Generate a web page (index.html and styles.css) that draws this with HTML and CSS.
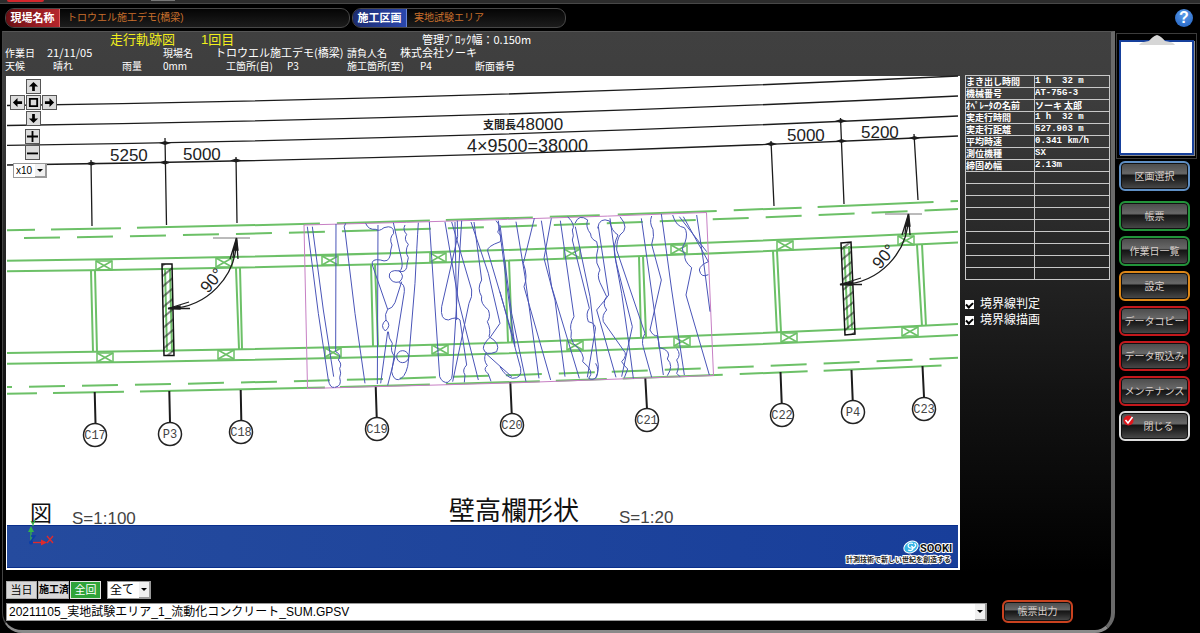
FILE: index.html
```html
<!DOCTYPE html>
<html lang="ja">
<head>
<meta charset="utf-8">
<title>走行軌跡図</title>
<link rel="stylesheet" href="styles.css">
</head>
<body>
<div class="titlebar"><span class="titlebar-mark"></span><span class="titlebar-dots"></span></div>
<header class="header">
  <div class="field field-site"><span class="field-label label-red">現場名称</span><span class="field-value">トロウエル施工デモ(橋梁)</span></div>
  <div class="field field-area"><span class="field-label label-blue">施工区画</span><span class="field-value">実地試験エリア</span></div>
  <button class="help" aria-label="ヘルプ">?</button>
</header>
<div class="layout">
<main class="panel">
  <div class="info">
    <div class="info-top"><h1 class="title">走行軌跡図</h1><span class="title">1回目</span><span class="block-width">管理ﾌﾞﾛｯｸ幅：0.150m</span></div>
    <div class="info-grid">
      <span class="c1">作業日</span><span class="c2 value">21/11/05</span><span class="c4">現場名</span><span class="c5 value wide">トロウエル施工デモ(橋梁)</span><span class="c7">請負人名</span><span class="c8 value">株式会社ソーキ</span>
      <span class="c1 r2">天候</span><span class="c2 r2 inset">晴れ</span><span class="c3 r2">雨量</span><span class="c4 r2">0mm</span><span class="c5 r2 inset-wide">工箇所(自)</span><span class="c6 r2">P3</span><span class="c7 r2 span">施工箇所(至)</span><span class="c9 r2">P4</span><span class="c10 r2">断面番号</span>
    </div>
  </div>
  <div class="work">
    <section class="canvas">
      <svg class="drawing" viewBox="6 75 954 495" role="img" aria-label="橋梁図面と走行軌跡">
        <defs>
          <g id="box"><rect x="-8" y="-4" width="16" height="9"/><path d="M-8 -4L8 5M8 -4L-8 5"/></g>
          <pattern id="hatch" width="8" height="8" patternUnits="userSpaceOnUse" patternTransform="rotate(-40)"><path d="M0 4H8" class="hatch-line"/></pattern>
          <linearGradient id="band" x1="0" x2="1"><stop offset="0" stop-color="#254b9e"/><stop offset="1" stop-color="#183e9a"/></linearGradient>
          <g id="angle">
            <path class="thin" d="M213 238H250"/>
            <path class="ink" d="M236.500 240A69 69 0 0 1 170 308.500"/>
            <path class="ink fill" d="M236.500 238L234 250L238 250Z"/>
            <path class="ink" d="M236.500 238L230 259M236.500 238L238 259M233 258L234 248"/>
            <path class="ink fill" d="M168 308.500L180 306L180 309Z"/>
            <path class="ink" d="M168 308.500L189 302M168 308.500H190"/>
            <text class="dim" transform="translate(208 294) rotate(-50)">90°</text>
          </g>
        </defs>
        <rect class="paper" x="6" y="76" width="954" height="494"/>
        <g class="plan">
          <path stroke-dasharray="28 16 70 16 183 17 93 16 87 17 50 18 99 17 68 16 116 17 20" d="M7 230.300Q482 222.300 958 201"/>
          <path stroke-dasharray="36 17" stroke-dashoffset="36" d="M7 238.300Q482 230.900 958 209"/>
          <path d="M7 260.700Q482 255.200 958 231.700M7 271.300Q482 265.900 958 242.500M7 353Q482 348 958 324M7 363.700Q482 358.700 958 335"/>
          <path stroke-dasharray="36 17" stroke-dashoffset="31" d="M7 387Q482 379.600 958 357.700"/>
          <path stroke-dasharray="30 16 71 16 185 15 90 16 94 16 51 16 100 17 68 16 118 20" d="M7 393.700Q482 386.800 958 364.700"/>
          <path d="M91 271L93 352M95 271L97 352M236 268L239 349M240 268L242 349M371 264L373 346M375 264L378 346M505 261L508 342M509 260L512 342M639 256L641 337M643 256L646 337M773 251L777 333M777 251L781 332M917 245L922 326M922 244L926 326"/>
          <use href="#box" x="104" y="265"/><use href="#box" x="224" y="262"/><use href="#box" x="330" y="260"/><use href="#box" x="438" y="257"/><use href="#box" x="572" y="253"/><use href="#box" x="679" y="249"/><use href="#box" x="785" y="245"/><use href="#box" x="906" y="240"/>
          <use href="#box" x="105" y="357"/><use href="#box" x="226" y="354"/><use href="#box" x="333" y="352"/><use href="#box" x="440" y="349"/><use href="#box" x="575" y="345"/><use href="#box" x="682" y="341"/><use href="#box" x="789" y="337"/><use href="#box" x="910" y="331"/>
          <path d="M165 268L167 352M170 268L172 352M844 246L848 330M849 246L852 330"/>
        </g>
        <g class="ink">
          <path d="M7 105.500Q482 98.900 958 76M7 125.500Q482 118.900 958 96M7 145.300Q482 138.900 958 116M7 165Q482 158.500 958 136"/>
          <path d="M91 160L92 226M165 138L166.500 225M236 157L237 223M771 141L774 206M840.500 118L844 204M914 134L918 200"/>
          <path class="hatched" d="M162 264L172 264L174 355.500L164 355.500Z"/>
          <path class="hatched" d="M841 243L851 242L855 334L845 335Z"/>
          <path class="stem" d="M94.700 392L95.500 423M169.300 391L170 422M240.700 390L241.300 420M375.700 386L376.700 417M510.300 382L511.700 413M645.300 378L647 409M780.500 372L781.700 403M851.500 370L852.700 400M922.500 366L924 397"/>
        </g>
        <g class="tick">
          <path d="M159 143L165 141L171 143L165 145ZM835 121L841 119L847 121L841 123ZM86 163.500L91.500 161.500L97 163.500L91.500 165.500ZM159 162.500L165 160.500L171 162.500L165 164.500ZM230 160.500L236 158.500L242 160.500L236 162.500ZM765 144L771 142L777 144L771 146ZM836 141L841.500 139L847 141L841.500 143ZM909 138L914.500 136L920 138L914.500 140Z"/>
        </g>
        <use href="#angle"/><use href="#angle" x="672" y="-24"/>
        <g class="dim">
          <text x="110" y="161">5250</text><text x="183" y="160">5000</text><text x="787" y="141">5000</text><text x="861" y="138">5200</text>
          <text class="span-label" x="483" y="129">支間長</text><text x="516" y="130">48000</text><text class="dim-large" x="467" y="152">4×9500=38000</text>
        </g>
        <g class="grid-mark">
          <circle cx="95" cy="435" r="11.500"/><circle cx="170" cy="434" r="11.500"/><circle cx="241" cy="432" r="11.500"/><circle cx="377" cy="429" r="11.500"/><circle cx="512" cy="425" r="11.500"/><circle cx="647" cy="420" r="11.500"/><circle cx="782" cy="415" r="11.500"/><circle cx="853" cy="412" r="11.500"/><circle cx="924" cy="409" r="11.500"/>
          <text x="95" y="439">C17</text><text x="170" y="438">P3</text><text x="241" y="436">C18</text><text x="377" y="433">C19</text><text x="512" y="429">C20</text><text x="647" y="424">C21</text><text x="782" y="419">C22</text><text x="853" y="416">P4</text><text x="924" y="413">C23</text>
        </g>
        <path class="boundary" d="M304 225Q510 220 706.500 212.500L713.500 375.500Q510 384 307.500 388.500Z"/>
        <g class="track" transform="translate(295 200) scale(.33333)">
          <path d="M37 80L70 340L100 540Q105 565 118 562M52 80L85 330L116 530"/>
          <path d="M123 72L122 455q20 10 8 25q12 12 4 25q6 15 0 28q8 25 -14 29"/>
          <path d="M152 70q-8 10 -2 22L180 340L210 550M249 75L247 552"/>
          <path d="M212 70q8 20 30 18q10 8 25 -5q30 -10 29 17q-15 15 -5 35q-5 15 -5 30q-5 25 -30 15q-28 -5 -24 15L278 328"/>
          <path d="M295 68L320 180q5 25 -6 33q-34 -6 -31 18q8 20 30 15q20 -18 -2 -34M320 245L300 308q-8 18 -22 20q-10 15 -5 32q-20 17 -2 33q20 -17 2 -33M280 395q0 20 12 35q-8 25 8 40L278 556M278 395L257 550"/>
          <path d="M330 75q-8 15 5 28q-10 15 5 30q-12 20 0 40q-5 20 -5 30q-5 15 -22 11"/>
          <path d="M312 248Q330 250 328 275L290 515q5 25 20 24q20 -5 28 -40L342 468L360 250Q366 130 370 68"/>
          <circle cx="323" cy="470" r="18"/>
          <path d="M403 66L434 530q8 20 25 17q15 -10 13 -25L500 62M450 66L490 300L550 540M470 66L530 270Q533 290 522 310L473 545"/>
          <path d="M487 62L488 110L440 320q-5 40 20 40q25 -12 35 0L515 495q-15 15 -5 30l-2 22M480 66L485 360"/>
          <path d="M528 66L580 220L615 370L587 410M537 66L560 240q-15 25 0 50q-5 20 20 40q8 20 -3 35q12 25 5 45Q618 430 605 455Q570 470 565 445q0 -15 22 -35"/>
          <path d="M572 460q-8 20 5 37q-15 10 3 25l8 22M572 460L650 530M603 62q15 15 5 35q15 10 8 28q-42 15 -38 28L660 430M610 62L660 440"/>
        </g>
        <g class="track" transform="translate(500 200) scale(.33333)">
          <path d="M0 75L35 340L78 545M0 275L62 505q5 30 -25 30q-20 -5 -37 -35"/>
          <path d="M48 65L75 230L117 535M103 55L70 190q15 40 2 70L152 540M124 62L155 260L238 535M154 55L132 175L165 300L195 530"/>
          <path d="M181 62L222 350q-15 25 -8 45q-5 18 6 35q38 35 28 55q38 30 18 50q14 8 24 -5q8 -22 -3 -40"/>
          <path d="M203 50q25 25 14 40q6 20 0 30L268 325q-12 15 -3 40q27 5 20 30L262 532"/>
          <path d="M225 70q12 -30 38 -10q-8 20 9 42q0 15 18 23q8 20 0 40q-4 25 10 45q-10 15 0 38L320 290q-15 20 0 40q-15 15 -10 35L370 450q15 15 -5 35q10 15 18 22l-10 26"/>
          <path d="M226 80L270 290L292 480q8 25 -5 55"/>
          <path d="M293 85q5 -35 36 -22q5 30 25 42q-15 30 -10 60L365 280L385 420L400 535"/>
          <path d="M295 80L326 285Q315 300 290 330L348 532M330 55L348 185L397 380L365 530M360 50q30 35 0 55q-10 15 -10 45L435 400q-12 20 -5 42L455 532"/>
          <path d="M424 55L490 525M455 48q-8 20 4 40q5 20 -4 45L484 240L450 390q10 20 22 17q5 20 5 35q40 10 25 35q20 20 0 50"/>
          <path d="M484 42L515 270L553 525M518 45q10 35 35 38q12 15 2 45q-15 20 0 35q-5 20 20 40L558 285L628 525M530 445q15 20 0 35q10 20 0 40l10 10"/>
          <path d="M538 50L620 155M550 50L625 185q-25 10 -27 25q5 25 27 14M590 45L612 195L630 335"/>
        </g>
        <g class="caption">
          <text class="caption-view" x="30" y="521">図</text><text x="72" y="524">S=1:100</text>
          <text class="caption-shape" x="449" y="520">壁高欄形状</text><text x="619" y="523">S=1:20</text>
        </g>
        <rect x="7" y="525" width="951" height="43" fill="url(#band)"/>
        <path class="band-edge" d="M7 525.500H958M7 567.500H958"/>
        <g class="axis">
          <path stroke="#35b44a" d="M31 542V530"/><path fill="#35b44a" d="M28 532L31 526L34 532Z"/>
          <path stroke="#35b44a" d="M31 521L33 524L35 520M33 524V526"/>
          <path stroke="#e02b2b" d="M33 542.500H42"/><path fill="#e02b2b" d="M41 539.500L47 542.500L41 545.500Z"/>
          <path stroke="#e02b2b" d="M47 536L53 543M53 536L47 543"/>
          <circle cx="31" cy="542.500" r="2" fill="#0b3fa8"/><path stroke="#0b3fa8" d="M31 536H35L31 541"/>
        </g>
        <g class="logo">
          <ellipse class="logo-halo" cx="911" cy="547" rx="8" ry="6" transform="rotate(-25 911 547)"/>
          <ellipse cx="911" cy="547" rx="7" ry="5" fill="#36b5e6" transform="rotate(-25 911 547)"/>
          <path class="logo-swirl" d="M913 543.500c-5 -2 -7 4 -2 4.500c5 1 6 -5 3 -4M908 550c5 2 7 -3 3 -4"/>
          <text class="logo-name" x="920" y="552">SOOKI</text>
          <text class="logo-tag" x="846" y="562">計測技術で新しい世紀を創造する</text>
        </g>
      </svg>
      <div class="controls">
        <div class="pad">
          <button class="pad-up" aria-label="上へ"><svg viewBox="0 0 12 12"><path d="M6 1L11 6H7.500V11H4.500V6H1Z"/></svg></button>
          <button class="pad-left" aria-label="左へ"><svg viewBox="0 0 12 12"><path d="M1 6L6 1V4.500H11V7.500H6V11Z"/></svg></button>
          <button class="pad-home" aria-label="中央"><svg viewBox="0 0 12 12"><path fill-rule="evenodd" d="M1 1H11V11H1ZM3 3V9H9V3Z"/></svg></button>
          <button class="pad-right" aria-label="右へ"><svg viewBox="0 0 12 12"><path d="M11 6L6 1V4.500H1V7.500H6V11Z"/></svg></button>
          <button class="pad-down" aria-label="下へ"><svg viewBox="0 0 12 12"><path d="M6 11L11 6H7.500V1H4.500V6H1Z"/></svg></button>
        </div>
        <div class="zoom">
          <button aria-label="拡大"><svg viewBox="0 0 12 12"><path d="M5 0H7V5H12V7H7V12H5V7H0V5H5Z"/></svg></button>
          <button aria-label="縮小"><svg viewBox="0 0 12 12"><path d="M0 6H12V8H0Z"/></svg></button>
        </div>
        <div class="select select-scale"><select aria-label="倍率"><option>x10</option></select><span class="caret"></span></div>
      </div>
    </section>
    <section class="details">
      <table class="specs">
        <tbody>
          <tr><th scope="row">まき出し時間</th><td>1 h  32 m</td></tr>
          <tr><th scope="row">機械番号</th><td>AT-75G-3</td></tr>
          <tr><th scope="row">ｵﾍﾟﾚｰﾀの名前</th><td class="jp">ソーキ 太郎</td></tr>
          <tr><th scope="row">実走行時間</th><td>1 h  32 m</td></tr>
          <tr><th scope="row">実走行距離</th><td>527.903 m</td></tr>
          <tr><th scope="row">平均時速</th><td>0.341 km/h</td></tr>
          <tr><th scope="row">測位機種</th><td>SX</td></tr>
          <tr><th scope="row">締固め幅</th><td>2.13m</td></tr>
          <tr><th></th><td></td></tr><tr><th></th><td></td></tr><tr><th></th><td></td></tr>
          <tr><th></th><td></td></tr><tr><th></th><td></td></tr><tr><th></th><td></td></tr>
          <tr><th></th><td></td></tr><tr><th></th><td></td></tr><tr><th></th><td></td></tr>
        </tbody>
      </table>
      <div class="checks">
        <label><input type="checkbox" checked>境界線判定</label>
        <label><input type="checkbox" checked>境界線描画</label>
      </div>
    </section>
  </div>
  <div class="filters">
    <button class="tab">当日</button><button class="tab tab-tight">施工済</button><button class="tab tab-on">全回</button>
    <div class="select select-all"><select aria-label="層"><option>全て</option></select><span class="caret"></span></div>
  </div>
  <div class="output">
    <div class="select select-file"><select aria-label="ファイル"><option>20211105_実地試験エリア_1_流動化コンクリート_SUM.GPSV</option></select><span class="caret"></span></div>
    <button class="btn btn-output">帳票出力</button>
  </div>
</main>
<aside class="sidebar">
  <div class="clipboard">
    <svg class="clip-icon" viewBox="0 0 36 10" aria-hidden="true"><path d="M0 10Q1 7 10 6Q14 1 18 0Q22 1 26 6Q35 7 36 10Z"/></svg>
    <div class="sheet"></div>
  </div>
  <nav class="menu">
    <button class="btn blue">区画選択</button>
    <button class="btn green first">帳票</button>
    <button class="btn green">作業日一覧</button>
    <button class="btn orange">設定</button>
    <button class="btn red">データコピー</button>
    <button class="btn red">データ取込み</button>
    <button class="btn red">メンテナンス</button>
    <button class="btn white"><svg class="close-mark" viewBox="0 0 11 11" aria-hidden="true"><circle cx="5.500" cy="5.500" r="5" fill="#e0161c"/><path d="M2.500 5L5 8L9.500 2" fill="none" stroke="#fff" stroke-width="1.500"/></svg><span>閉じる</span></button>
  </nav>
</aside>
</div>
</body>
</html>
```
FILE: styles.css
```css
* { box-sizing: border-box; }
body {
  margin: 0;
  min-height: 100vh;
  display: flex;
  flex-direction: column;
  background: #000;
  color: #fff;
  font: 10px/13px "Liberation Sans", "Noto Sans CJK JP", sans-serif;
}
button, select, input { font: inherit; margin: 0; padding: 0; border-radius: 0; }
.titlebar { display: flex; align-items: flex-start; gap: 107px; height: 4px; padding-left: 7px; background: #2c2c2c; border-bottom: 1px solid #484848; }
.titlebar-mark { width: 37px; height: 2px; border-radius: 0 0 4px 4px; background: #d5262b; }
.titlebar-dots { width: 24px; height: 1px; background: #777; }
.header { display: flex; align-items: center; gap: 2px; height: 27px; padding: 0 7px 0 5px; }
.field { display: flex; height: 20px; border: 1px solid #484848; border-radius: 9px; overflow: hidden; background: linear-gradient(#050505, #1c1c1c); }
.field-site { flex: 0 1 345px; }
.field-area { flex: 0 1 214px; }
.field-label { width: 54px; line-height: 18px; text-align: center; font-size: 11px; font-weight: bold; }
.label-red { background: linear-gradient(90deg, #6b0f14, #b5262c); border-right: 1px solid #e05a5a; }
.label-blue { background: linear-gradient(90deg, #1c2c70, #2a47ad); border-right: 1px solid #6a86d8; }
.field-value { padding-left: 7px; line-height: 18px; color: #c9702c; white-space: nowrap; }
.help { margin-left: auto; width: 18px; height: 18px; border: 0; border-radius: 50%; background: radial-gradient(circle at 50% 30%, #5b9be8, #1f5fc0); color: #fff; font-size: 16px; line-height: 18px; font-weight: bold; }

.layout { flex: 1; display: flex; align-items: stretch; }
.panel {
  flex: 1;
  min-width: 0;
  padding: 0 0 5px 3px;
  border: solid #666;
  border-width: 1px 4px 3px 1px;
  border-color: #555 #6a6a6a #8a8a8a #444;
  border-radius: 0 0 20px 20px;
  margin-left: 2px;
  background: linear-gradient(#404040 0, #3e3e3e 60px, #262626 220px, #131313 360px, #000 540px);
}
.info { height: 43px; margin-left: -1px; white-space: nowrap; }
.info-top { display: flex; align-items: center; padding-left: 105px; height: 14px; }
.title { width: 91px; margin: 0; font-size: 13px; font-weight: normal; color: #f2ee1c; }
.title + .title { width: 221px; }
.block-width { font: 11px/13px "Noto Sans CJK JP", sans-serif; }
.info-grid { display: grid; grid-template-columns: 42px 75px 41px 52px 72px 60px 53px 20px 55px auto; grid-auto-rows: 13px; justify-content: start; font-family: "Noto Sans CJK JP", sans-serif; }
.c1 { grid-column: 1; } .c2 { grid-column: 2; } .c3 { grid-column: 3; } .c4 { grid-column: 4; } .c5 { grid-column: 5; }
.c6 { grid-column: 6; } .c7 { grid-column: 7; } .c8 { grid-column: 8; } .c9 { grid-column: 9; } .c10 { grid-column: 10; }
.r2 { grid-row: 2; }
.value { font-size: 11px; }
.wide { grid-column: 5 / span 2; }
.span { grid-column: 7 / span 2; }
.inset { padding-left: 6px; }
.inset-wide { padding-left: 11px; }

.work { display: flex; align-items: flex-start; gap: 5px; }
.canvas { position: relative; flex: 1; min-width: 0; }
.drawing { display: block; width: 100%; height: auto; }
.paper { fill: #fff; }
.plan { fill: none; stroke: #6cc067; stroke-width: 2; }
.plan use { stroke-width: 1.5; }
.ink { fill: none; stroke: #1c1c1c; stroke-width: 1.3; }
.ink.fill, .tick { fill: #1c1c1c; }
.thin { fill: none; stroke: #777; stroke-width: 1; }
.stem { stroke-width: 2; }
.hatched { fill: url(#hatch); stroke: #111; stroke-width: 1.5; }
.hatch-line { stroke: #111; stroke-width: 1; }
.boundary { fill: none; stroke: #c77fc4; stroke-width: 1; }
.track path, .track circle { fill: none; stroke: #4a55b8; stroke-width: 1; vector-effect: non-scaling-stroke; }
.dim { font: 17px "Liberation Sans", sans-serif; fill: #222; }
.dim-large { font-size: 18px; }
.span-label { font: bold 11px "Noto Sans CJK JP", sans-serif; }
.grid-mark circle { fill: none; stroke: #222; stroke-width: 1.5; }
.grid-mark text { font: 12px "Liberation Mono", monospace; fill: #444; text-anchor: middle; }
.caption { font: 17px "Liberation Sans", sans-serif; fill: #444; }
.caption-view { font: 22px "Noto Sans CJK JP", sans-serif; fill: #111; }
.caption-shape { font: 26px "Noto Sans CJK JP", sans-serif; fill: #111; }
.band-edge { stroke: #0a2f8c; }
.axis { fill: none; stroke-width: 1.3; }
.logo-halo { fill: #fff; }
.logo-swirl { fill: none; stroke: #fff; stroke-width: 1.2; }
.logo-name { font: bold 11px "Roboto", sans-serif; fill: #111; stroke: #fff; stroke-width: 2; paint-order: stroke; }
.logo-tag { font: bold 7px "Noto Sans CJK JP", sans-serif; fill: #222; stroke: #fff; stroke-width: 2; paint-order: stroke; }

.controls { position: absolute; top: 4px; left: 4px; display: flex; flex-direction: column; align-items: flex-start; gap: 3px; }
.pad { display: grid; grid-template: repeat(3, 15px) / repeat(3, 15px); gap: 1px; }
.pad-up { grid-area: 1 / 2; } .pad-left { grid-area: 2 / 1; } .pad-home { grid-area: 2 / 2; } .pad-right { grid-area: 2 / 3; } .pad-down { grid-area: 3 / 2; }
.zoom { display: grid; grid-auto-rows: 15px; width: 15px; margin-left: 15px; gap: 1px; }
.pad button, .zoom button { display: grid; place-items: center; border: 1px solid #555; background: #dcdcdc; }
.pad svg, .zoom svg { width: 11px; height: 11px; fill: #000; display: block; }

.select { display: grid; grid-template-columns: 1fr auto; background: #fff; border: 1px solid #999; color: #000; }
.select select { grid-area: 1 / 1 / 2 / 3; width: 100%; appearance: none; border: 0; background: transparent; color: #000; padding-left: 2px; }
.caret { grid-area: 1 / 2; width: 11px; display: grid; place-items: center; background: #f0f0f0; border: solid #999; border-width: 0 1px 1px 0; pointer-events: none; }
.caret::before { content: ""; border: solid transparent; border-width: 3px 3px 0; border-top-color: #000; }
.select-scale { width: 34px; height: 15px; margin-left: 3px; }

.details { width: 146px; }
.specs { border-collapse: collapse; table-layout: fixed; width: 145px; font: bold 9px/11px "Noto Sans CJK JP", sans-serif; }
.specs th, .specs td { height: 12px; padding: 0; border: 1px solid #c8c8c8; text-align: left; vertical-align: middle; white-space: pre; overflow: hidden; }
.specs th { width: 69px; }
.specs td { font-family: "Liberation Mono", "Noto Sans CJK JP", monospace; }
.specs .jp { font-family: "Noto Sans CJK JP", sans-serif; }
.checks { display: grid; gap: 3px; padding-top: 18px; font-size: 12px; }
.checks label { display: flex; align-items: center; gap: 6px; height: 13px; }
.checks input { appearance: none; width: 9px; height: 9px; background: #fff; display: grid; place-items: center; }
.checks input:checked::before { content: ""; width: 5px; height: 3px; border: solid #000; border-width: 0 0 2px 2px; transform: rotate(-45deg); }

.filters { display: flex; gap: 1px; margin-top: 11px; }
.tab { width: 31px; height: 18px; border: 1px solid #aaa; background: #d8d8d8; color: #000; font-size: 11px; line-height: 16px; }
.tab-tight { font-size: 10px; white-space: nowrap; font-weight: bold; }
.tab-on { background: #2fa33a; color: #fff; border-color: #e4e4e4; }
.select-all { width: 44px; height: 18px; margin-left: 5px; font-size: 12px; }
.output { display: flex; align-items: center; gap: 15px; margin: 1px 38px 0 0; }
.select-file { flex: 1; height: 18px; font-size: 12px; line-height: 16px; }

.btn { position: relative; width: 71px; height: 30px; border: 2px solid #888; border-radius: 6px; color: #d8cfcb; font-size: 10px; white-space: nowrap; background: linear-gradient(#4a4a4a 0, #686868 40%, #151515 48%, #242424 65%, #4c4c4c); box-shadow: inset 0 0 0 1px #111; }
.btn-output { height: 23px; border-color: #c9421f; }
.blue { border-color: #5f8fc4; }
.green { border-color: #22943a; }
.orange { border-color: #dd8718; }
.red { border-color: #c4181c; }
.white { border-color: #ddd; padding-left: 8px; }
.close-mark { position: absolute; left: 2px; top: 2px; width: 11px; height: 11px; }
.sidebar { width: 85px; padding: 2px 3px 0 1px; }
.clipboard { position: relative; height: 126px; padding: 6px 2px 3px; border: 1px solid #3c3c3c; }
.sheet { height: 100%; background: #fff; border: 2px solid #16409c; box-shadow: 1px 1px 0 #888; }
.clip-icon { position: absolute; top: 1px; left: 22px; width: 36px; height: 10px; fill: #d6d6d6; }
.menu { display: grid; gap: 5px; padding: 2px 0 0 3px; }
.menu .first { margin-top: 5px; }
```
